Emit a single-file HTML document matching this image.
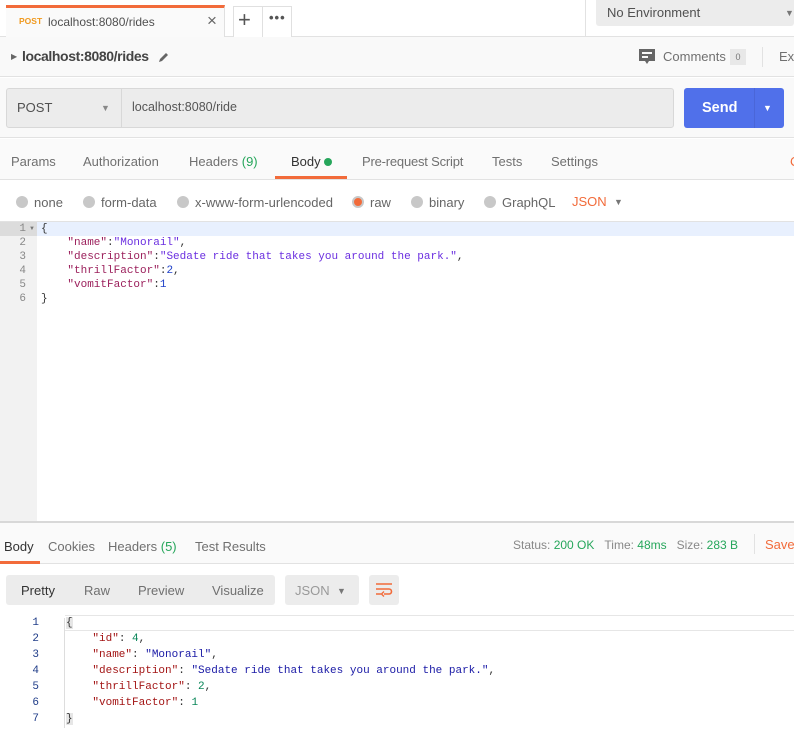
<!DOCTYPE html>
<html><head><style>
*{box-sizing:border-box;margin:0;padding:0}
body{width:794px;height:737px;overflow:hidden;background:#fff;font-family:"Liberation Sans",sans-serif;font-size:13px;color:#505050;position:relative}
.a{position:absolute;white-space:nowrap}
.mono{font-family:"Liberation Mono",monospace}
.radio{position:absolute;width:12px;height:12px;border-radius:50%;background:#c8c8c8}
</style></head><body>
<!-- top bar -->
<div class="a" style="left:0;top:36px;width:794px;height:1px;background:#e2e2e2"></div>
<div class="a" style="left:6px;top:5px;width:219px;height:32px;background:#fafafa;border-top:3px solid #f26b3a;border-right:1px solid #e0e0e0"></div>
<div class="a" style="left:19px;top:16px;font-size:8.5px;color:#f09a1f;font-weight:bold">POST</div>
<div class="a" style="left:48px;top:15px;font-size:12px;color:#505050">localhost:8080/rides</div>
<div class="a" style="left:207px;top:11px;font-size:17px;color:#666">×</div>
<div class="a" style="left:233px;top:6px;width:59px;height:31px;border:1px solid #e0e0e0;border-bottom:none;background:#fff"></div>
<div class="a" style="left:262px;top:6px;width:1px;height:31px;background:#e0e0e0"></div>
<div class="a" style="left:238px;top:7px;font-size:22px;color:#555">+</div>
<div class="a" style="left:269px;top:10px;font-size:13px;color:#555;letter-spacing:1px;font-weight:bold">•••</div>
<div class="a" style="left:585px;top:0;width:1px;height:36px;background:#e2e2e2"></div>
<div class="a" style="left:596px;top:0;width:198px;height:26px;background:#ececec;border-radius:0 0 3px 3px"></div>
<div class="a" style="left:607px;top:5px;font-size:13px;color:#505050">No Environment</div>
<div class="a" style="left:785px;top:8px;font-size:9px;color:#777">▼</div>
<!-- name row -->
<div class="a" style="left:0;top:37px;width:794px;height:40px;background:#f9f9f9;border-bottom:1px solid #e2e2e2"></div>
<div class="a" style="left:11px;top:52px;font-size:8px;color:#666">▶</div>
<div class="a" style="left:22px;top:48px;font-size:14px;color:#444;font-weight:bold;letter-spacing:-0.4px">localhost:8080/rides</div>
<svg class="a" style="left:158px;top:51px" width="12" height="12" viewBox="0 0 12 12"><path d="M1 11 L2 8 L8 2 L10 4 L4 10 Z" fill="#666"/></svg>
<svg class="a" style="left:639px;top:49px" width="16" height="17" viewBox="0 0 16 17"><path d="M0 0H16V12H10L8 15L6 12H0Z" fill="#666"/><rect x="3" y="3" width="10" height="2" fill="#f9f9f9"/><rect x="3" y="7" width="6" height="2" fill="#f9f9f9"/></svg>
<div class="a" style="left:663px;top:49px;font-size:13px;color:#707070">Comments</div>
<div class="a" style="left:730px;top:49px;width:16px;height:16px;background:#e8e8e8;font-size:9px;text-align:center;line-height:16px;color:#777">0</div>
<div class="a" style="left:762px;top:47px;width:1px;height:20px;background:#e2e2e2"></div>
<div class="a" style="left:779px;top:49px;font-size:13px;color:#707070">Exa</div>
<!-- url row -->
<div class="a" style="left:0;top:78px;width:794px;height:60px;background:#f9f9f9;border-bottom:1px solid #e2e2e2"></div>
<div class="a" style="left:6px;top:88px;width:668px;height:40px;background:#ececec;border:1px solid #d8d8d8;border-radius:3px"></div>
<div class="a" style="left:121px;top:89px;width:1px;height:38px;background:#d8d8d8"></div>
<div class="a" style="left:17px;top:100px;font-size:13px;color:#505050">POST</div>
<div class="a" style="left:101px;top:103px;font-size:9px;color:#888">▼</div>
<div class="a" style="left:132px;top:100px;font-size:12.5px;color:#555">localhost:8080/ride</div>
<div class="a" style="left:684px;top:88px;width:100px;height:40px;background:#5070ea;border-radius:3px"></div>
<div class="a" style="left:754px;top:88px;width:1px;height:40px;background:#4a66d8"></div>
<div class="a" style="left:702px;top:100px;font-size:14.5px;color:#fff;font-weight:bold">Send</div>
<div class="a" style="left:763px;top:103px;font-size:9px;color:#fff">▼</div>
<!-- tabs row -->
<div class="a" style="left:0;top:139px;width:794px;height:41px;background:#fafafa;border-bottom:1px solid #e2e2e2"></div>
<div class="a" style="left:11px;top:154px;color:#707070">Params</div>
<div class="a" style="left:83px;top:154px;color:#707070">Authorization</div>
<div class="a" style="left:189px;top:154px;color:#707070">Headers <span style="color:#26a65b">(9)</span></div>
<div class="a" style="left:291px;top:154px;color:#333">Body</div>
<div class="a" style="left:324px;top:158px;width:8px;height:8px;border-radius:50%;background:#26a65b"></div>
<div class="a" style="left:275px;top:176px;width:72px;height:3px;background:#f26b3a"></div>
<div class="a" style="left:362px;top:154px;color:#707070;letter-spacing:-0.2px">Pre-request Script</div>
<div class="a" style="left:492px;top:154px;color:#707070">Tests</div>
<div class="a" style="left:551px;top:154px;color:#707070">Settings</div>
<div class="a" style="left:790px;top:154px;color:#f26b3a">C</div>
<!-- body options -->
<div class="radio" style="left:16px;top:196px"></div><div class="a" style="left:34px;top:195px;color:#666">none</div>
<div class="radio" style="left:83px;top:196px"></div><div class="a" style="left:101px;top:195px;color:#666">form-data</div>
<div class="radio" style="left:177px;top:196px"></div><div class="a" style="left:195px;top:195px;color:#666">x-www-form-urlencoded</div>
<div class="radio" style="left:352px;top:196px;background:#f26b3a;border:2px solid #c8c8c8"></div><div class="a" style="left:370px;top:195px;color:#666">raw</div>
<div class="radio" style="left:411px;top:196px"></div><div class="a" style="left:429px;top:195px;color:#666">binary</div>
<div class="radio" style="left:484px;top:196px"></div><div class="a" style="left:502px;top:195px;color:#666">GraphQL</div>
<div class="a" style="left:572px;top:194px;color:#f26b3a">JSON</div>
<div class="a" style="left:614px;top:197px;font-size:9px;color:#777">▼</div>
<!-- editor -->
<div class="a" style="left:0;top:221px;width:794px;height:1px;background:#e2e2e2"></div>
<div class="a" style="left:0;top:222px;width:37px;height:299px;background:#f2f2f2"></div>
<div class="a" style="left:37px;top:222px;width:757px;height:14px;background:#e8f0fe"></div>
<div class="a" style="left:0;top:222px;width:37px;height:14px;background:#dcdcdc"></div>
<div class="a mono" style="left:0;top:222px;font-size:11px;line-height:14px;color:#888;width:26px;text-align:right">1<br>2<br>3<br>4<br>5<br>6</div>
<div class="a" style="left:29px;top:226px;font-size:6px;color:#777">▼</div>
<div class="a mono" style="left:41px;top:222px;font-size:11px;line-height:14px;color:#333">{<br>&nbsp;&nbsp;&nbsp;&nbsp;<span style="color:#9b1f5b">"name"</span>:<span style="color:#6b2fe0">"Monorail"</span>,<br>&nbsp;&nbsp;&nbsp;&nbsp;<span style="color:#9b1f5b">"description"</span>:<span style="color:#6b2fe0">"Sedate ride that takes you around the park."</span>,<br>&nbsp;&nbsp;&nbsp;&nbsp;<span style="color:#9b1f5b">"thrillFactor"</span>:<span style="color:#1e40c8">2</span>,<br>&nbsp;&nbsp;&nbsp;&nbsp;<span style="color:#9b1f5b">"vomitFactor"</span>:<span style="color:#1e40c8">1</span><br>}</div>
<!-- response -->
<div class="a" style="left:0;top:521px;width:794px;height:2px;background:#d8d8d8"></div>
<div class="a" style="left:0;top:523px;width:794px;height:41px;background:#fafafa;border-bottom:1px solid #e2e2e2"></div>
<div class="a" style="left:4px;top:539px;color:#333">Body</div>
<div class="a" style="left:0;top:561px;width:40px;height:3px;background:#f26b3a"></div>
<div class="a" style="left:48px;top:539px;color:#707070">Cookies</div>
<div class="a" style="left:108px;top:539px;color:#707070">Headers <span style="color:#26a65b">(5)</span></div>
<div class="a" style="left:195px;top:539px;color:#707070">Test Results</div>
<div class="a" style="left:513px;top:538px;font-size:12px;color:#888">Status: <span style="color:#26a65b">200 OK</span>&nbsp;&nbsp;&nbsp;Time: <span style="color:#26a65b">48ms</span>&nbsp;&nbsp;&nbsp;Size: <span style="color:#26a65b">283 B</span></div>
<div class="a" style="left:754px;top:534px;width:1px;height:20px;background:#e2e2e2"></div>
<div class="a" style="left:765px;top:537px;color:#f26b3a">Save</div>
<div class="a" style="left:6px;top:575px;width:269px;height:30px;background:#ececec;border-radius:3px"></div>
<div class="a" style="left:21px;top:583px;color:#333">Pretty</div>
<div class="a" style="left:84px;top:583px;color:#707070">Raw</div>
<div class="a" style="left:138px;top:583px;color:#707070">Preview</div>
<div class="a" style="left:212px;top:583px;color:#707070">Visualize</div>
<div class="a" style="left:285px;top:575px;width:74px;height:30px;background:#ececec;border-radius:3px"></div>
<div class="a" style="left:295px;top:583px;color:#999">JSON</div>
<div class="a" style="left:337px;top:586px;font-size:9px;color:#777">▼</div>
<div class="a" style="left:369px;top:575px;width:30px;height:30px;background:#ececec;border-radius:3px"></div>
<svg class="a" style="left:375px;top:582px" width="18" height="16" viewBox="0 0 18 16"><path d="M1 2H17M1 7H14a2.5 2.5 0 0 1 0 5H9M1 12H6" stroke="#f26b3a" stroke-width="1.6" fill="none"/><path d="M9 9.5L6.5 12L9 14.5" stroke="#f26b3a" stroke-width="1.4" fill="none"/></svg>
<div class="a" style="left:65px;top:615px;width:729px;height:16px;border-top:1px solid #e6e6e6;border-bottom:1px solid #e6e6e6"></div>
<div class="a mono" style="left:25px;top:615px;font-size:11px;line-height:16px;color:#1f3c88;width:14px;text-align:right">1<br>2<br>3<br>4<br>5<br>6<br>7</div>
<div class="a mono" style="left:66px;top:615px;font-size:11px;line-height:16px;color:#333"><span style="background:#e6e6e6">{</span><br>&nbsp;&nbsp;&nbsp;&nbsp;<span style="color:#a31515">"id"</span>: <span style="color:#098658">4</span>,<br>&nbsp;&nbsp;&nbsp;&nbsp;<span style="color:#a31515">"name"</span>: <span style="color:#1a1aa6">"Monorail"</span>,<br>&nbsp;&nbsp;&nbsp;&nbsp;<span style="color:#a31515">"description"</span>: <span style="color:#1a1aa6">"Sedate ride that takes you around the park."</span>,<br>&nbsp;&nbsp;&nbsp;&nbsp;<span style="color:#a31515">"thrillFactor"</span>: <span style="color:#098658">2</span>,<br>&nbsp;&nbsp;&nbsp;&nbsp;<span style="color:#a31515">"vomitFactor"</span>: <span style="color:#098658">1</span><br><span style="background:#e6e6e6">}</span></div>
<div class="a" style="left:64px;top:618px;width:1px;height:110px;background:#ddd"></div>
</body></html>
